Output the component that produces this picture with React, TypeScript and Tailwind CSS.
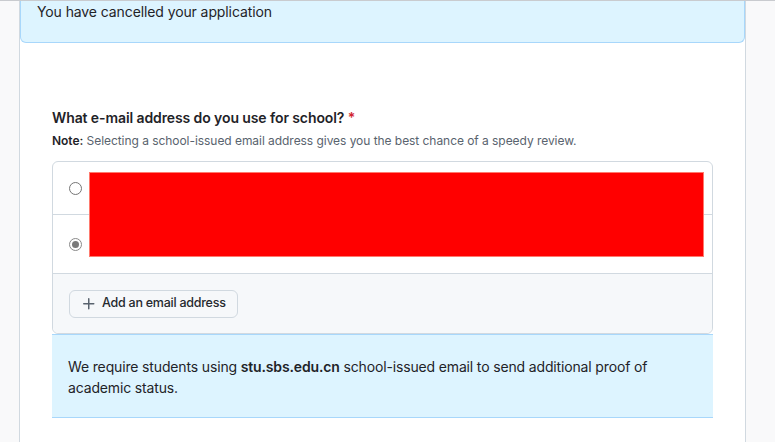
import React from "react";

export default function App() {
  return (
    <div
      className="w-[775px] h-[442px] overflow-hidden bg-[#f9f9fa] border-t border-[#c9cbcf] flex"
      style={{ fontFamily: "Inter, 'Noto Sans', sans-serif" }}
    >
      <div className="ml-[19px] w-[727px] h-full bg-white border-x border-[#d1d9e0] flex flex-col">
        <div className="h-[43px] bg-[#ddf4ff] border-x border-b border-[#a8d7fb] rounded-b-md pl-4 pt-[2px] text-[14px] leading-[20px] text-[#1f2328] -mt-px tracking-[-0.1px]">
          You have cancelled your application
        </div>
        <div className="px-8 pt-[65px]">
          <div className="text-[14px] leading-[20px] font-semibold text-[#1f2328] tracking-[-0.1px]">
            What e-mail address do you use for school? <span className="text-[#d1242f]">*</span>
          </div>
          <div className="mt-[4px] text-[12px] leading-[18px] text-[#59636e] tracking-[-0.05px]">
            <span className="font-semibold text-[#1f2328]">Note:</span> Selecting a school-issued email address gives you the best chance of a speedy review.
          </div>
          <div className="relative mt-[11px] border border-[#d1d9e0] rounded-md">
            <div className="h-[53px] flex items-center pl-[16px] border-b border-[#d1d9e0]">
              <span className="w-[13px] h-[13px] rounded-full border border-[#767676] bg-white" />
            </div>
            <div className="h-[59px] flex items-center pl-[16px] border-b border-[#d1d9e0]">
              <span className="w-[13px] h-[13px] rounded-full border border-[#8a8a8a] bg-white flex items-center justify-center">
                <span className="w-[7px] h-[7px] rounded-full bg-[#7a7a7a]" />
              </span>
            </div>
            <div className="h-[59px] bg-[#f6f8fa] rounded-b-md flex items-center pl-4">
              <button className="h-[28px] pl-[11px] pr-[11px] flex items-center gap-[5px] rounded-md border border-[#d1d9e0] bg-[#f6f8fa] text-[12.5px] tracking-[-0.25px] font-medium text-[#25292e]">
                <svg width="16" height="16" viewBox="0 0 16 16" fill="#59636e">
                  <path d="M7.75 2a.75.75 0 0 1 .75.75V7h4.25a.75.75 0 0 1 0 1.5H8.5v4.25a.75.75 0 0 1-1.5 0V8.5H2.75a.75.75 0 0 1 0-1.5H7V2.75A.75.75 0 0 1 7.75 2Z" />
                </svg>
                Add an email address
              </button>
            </div>
            <div className="absolute left-[36px] top-[10px] w-[615px] h-[85px] bg-[#ff0000] border border-[#ff7a6e]" />
          </div>
          <div className="bg-[#ddf4ff] border-y border-[#a8d7fb] pl-4 pr-4 pt-[21px] pb-[19px] text-[14px] leading-[21px] text-[#1f2328] tracking-[-0.15px]">
            We require students using <span className="font-semibold">stu.sbs.edu.cn</span> school-issued email to send additional proof of academic status.
          </div>
        </div>
      </div>
    </div>
  );
}
